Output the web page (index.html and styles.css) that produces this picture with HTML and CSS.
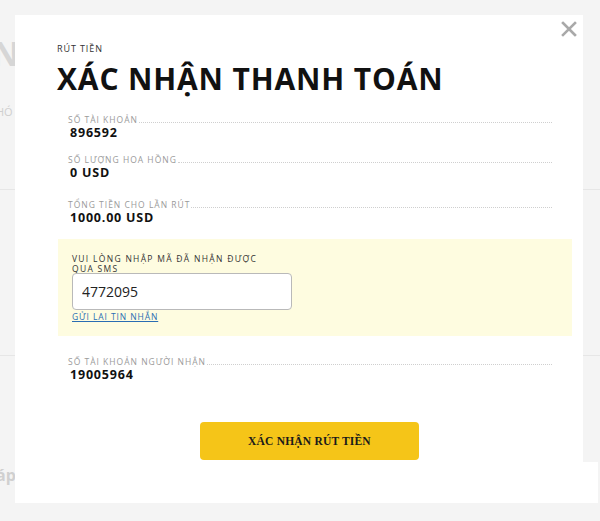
FILE: index.html
```html
<!DOCTYPE html>
<html lang="vi">
<head>
<meta charset="utf-8">
<link rel="stylesheet" href="styles.css">
</head>
<body>
<div class="backdrop">
  <div class="bg-text bg-n">N</div>
  <div class="bg-text bg-ho">HÓ</div>
  <div class="bg-line bg-l1"></div>
  <div class="bg-line bg-l2"></div>
  <div class="bg-line bg-r1"></div>
  <div class="bg-line bg-r2"></div>
  <div class="bg-white"></div>
  <div class="bg-text bg-ap">áp</div>
  <div class="modal">
    <button class="close" aria-label="Đóng">
      <svg width="16" height="16" viewBox="0 0 16 16"><path d="M2 2L14 14M14 2L2 14" stroke="#a9a9a9" stroke-width="2.6" stroke-linecap="square"/></svg>
    </button>
    <div class="eyebrow">RÚT TIỀN</div>
    <h1 class="title">XÁC NHẬN THANH TOÁN</h1>
    <div class="field f1">
      <div class="label-row"><span class="label">SỐ TÀI KHOẢN</span><span class="rule"></span></div>
      <div class="value">896592</div>
    </div>
    <div class="field f2">
      <div class="label-row"><span class="label">SỐ LƯỢNG HOA HỒNG</span><span class="rule"></span></div>
      <div class="value">0 USD</div>
    </div>
    <div class="field f3">
      <div class="label-row"><span class="label">TỔNG TIỀN CHO LẦN RÚT</span><span class="rule"></span></div>
      <div class="value">1000.00 USD</div>
    </div>
    <div class="sms-box">
      <div class="sms-label">VUI LÒNG NHẬP MÃ ĐÃ NHẬN ĐƯỢC QUA SMS</div>
      <input class="sms-input" type="text" value="4772095">
      <a class="resend" href="#">GỬI LẠI TIN NHẮN</a>
    </div>
    <div class="field f4">
      <div class="label-row"><span class="label">SỐ TÀI KHOẢN NGƯỜI NHẬN</span><span class="rule"></span></div>
      <div class="value">19005964</div>
    </div>
    <div class="actions">
      <button class="confirm">XÁC NHẬN RÚT TIỀN</button>
    </div>
  </div>
</div>
</body>
</html>
```

FILE: styles.css
```css
* { box-sizing: border-box; }
html, body { margin: 0; padding: 0; }
body {
  background: #f4f4f4;
  font-family: "Open Sans", "Noto Sans", sans-serif;
  width: 600px;
  height: 521px;
  overflow: hidden;
}
.backdrop {
  position: relative;
  width: 600px;
  height: 521px;
  padding: 15px 0 0 15px;
}
.bg-text {
  position: absolute;
  color: #d6d6d6;
  font-weight: 700;
}
.bg-n { left: -8px; top: 30px; font-size: 34px; }
.bg-ho { left: -4px; top: 104px; font-size: 11px; color: #cfcfcf; font-weight: 400; }
.bg-ap { left: -4px; top: 464px; font-size: 16px; color: #d0d0d0; }
.bg-line { position: absolute; height: 1px; background: #e6e6e6; }
.bg-l1 { left: 0; width: 15px; top: 189px; }
.bg-l2 { left: 0; width: 15px; top: 355px; }
.bg-r1 { left: 583px; width: 17px; top: 189px; }
.bg-r2 { left: 583px; width: 17px; top: 355px; }
.bg-white { position: absolute; left: 583px; top: 462px; width: 15px; height: 41px; background: #fff; }

.modal {
  position: relative;
  width: 568px;
  height: 488px;
  background: #fff;
  padding: 28px 0 0 42px;
  display: flex;
  flex-direction: column;
}
.close {
  position: absolute;
  top: 6px;
  right: 6px;
  width: 16px;
  height: 16px;
  padding: 0;
  border: 0;
  background: none;
  display: flex;
}
.eyebrow {
  font-size: 9px;
  line-height: 12px;
  letter-spacing: 0.9px;
  color: #333;
}
.title {
  margin: 6px 0 0;
  font-size: 30px;
  line-height: 36px;
  font-weight: 700;
  color: #111;
  letter-spacing: 0.85px;
}
.field {
  margin-left: 11px;
  width: 484px;
}
.f1 { margin-top: 17px; }
.f2 { margin-top: 14px; }
.f3 { margin-top: 19px; }
.f4 { margin-top: 20px; }
.label-row {
  display: flex;
  align-items: center;
  height: 12px;
}
.label {
  font-size: 8.5px;
  line-height: 12px;
  letter-spacing: 1px;
  color: #9a9a9a;
  white-space: nowrap;
}
.rule {
  flex: 1;
  align-self: flex-end;
  border-bottom: 1px dotted #cfcfcf;
  margin-bottom: 3px;
  margin-left: 1px;
}
.value {
  font-size: 12.5px;
  line-height: 14px;
  font-weight: 700;
  letter-spacing: 0.8px;
  color: #111;
  padding-left: 2px;
}
.sms-box {
  margin: 14px 0 0 1px;
  width: 514px;
  height: 97px;
  background: #fefce0;
  padding: 15px 0 0 14px;
  display: flex;
  flex-direction: column;
  align-items: flex-start;
}
.sms-label {
  width: 210px;
  font-size: 8.5px;
  line-height: 9.5px;
  letter-spacing: 1.3px;
  color: #333;
}
.sms-input {
  margin-top: 0;
  width: 220px;
  height: 37px;
  border: 1px solid #b9b9b9;
  border-radius: 4px;
  background: #fff;
  font-family: "Open Sans", sans-serif;
  font-size: 14px;
  color: #222;
  padding: 0 9px;
}
.resend {
  margin-top: 1px;
  font-size: 8.5px;
  line-height: 12px;
  letter-spacing: 0.9px;
  color: #2a6db3;
  text-decoration: underline;
}
.actions {
  display: flex;
  justify-content: flex-start;
  margin-top: 40px;
  padding-left: 143px;
}
.confirm {
  width: 219px;
  height: 38px;
  border: 0;
  border-radius: 4px;
  background: #f5c518;
  font-family: "Liberation Serif", "Times New Roman", serif;
  font-weight: 700;
  font-size: 11.5px;
  color: #1a1a1a;
  letter-spacing: 0.2px;
}
```
